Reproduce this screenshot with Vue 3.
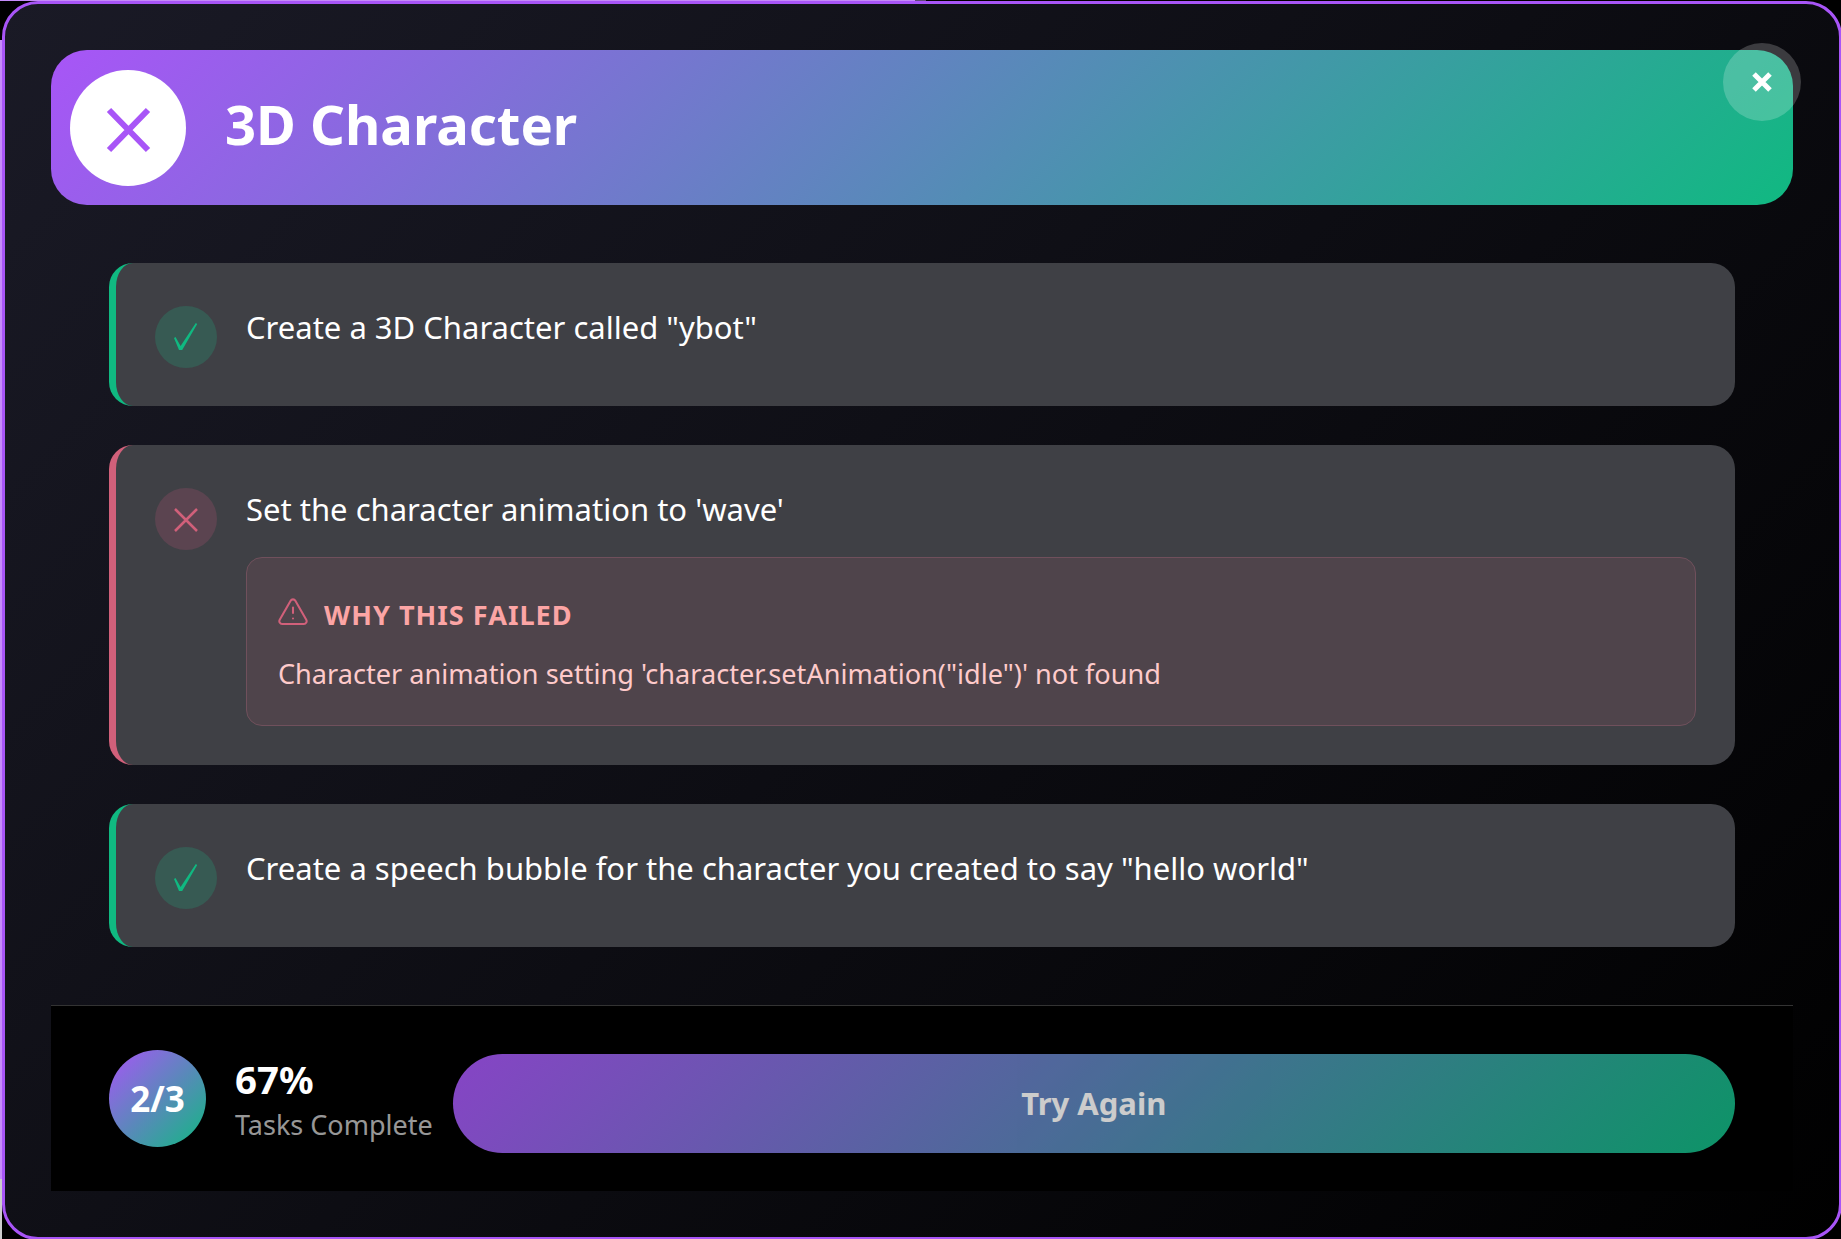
<template>
  <div class="page">
    <div class="strip-top"></div>
    <div class="strip-top-end"></div>
    <div class="strip-left"></div>
    <div class="modal">
      <button class="close">
        <svg width="78" height="78" viewBox="0 0 78 78" fill="none" stroke="#fff" stroke-width="5">
          <path d="M31 31 L47 47 M47 31 L31 47" />
        </svg>
      </button>
      <header class="head">
        <div class="head-icon">
          <svg width="116" height="116" viewBox="0 0 116 116" fill="none" stroke="#a855f7" stroke-width="6">
            <path d="M39 40 L78 80 M78 40 L39 80" />
          </svg>
        </div>
        <h1>{{ title }}</h1>
      </header>

      <div class="tasks">
        <div v-for="task in tasks" :key="task.text" class="task" :class="task.passed ? 'pass' : 'fail'">
          <div class="mark">
            <svg v-if="task.passed" width="62" height="62" viewBox="0 0 62 62" fill="#10b981">
              <path d="M19 32 L20.5 31 L25.6 40 L40.8 17 L42.2 18 L27.2 44 H24 Z" />
            </svg>
            <svg v-else width="62" height="62" viewBox="0 0 62 62" fill="none" stroke="#d1607a" stroke-width="2.5">
              <path d="M20 21 L42 43 M42 21 L20 43" />
            </svg>
          </div>
          <div class="task-body">
            <p class="task-text">{{ task.text }}</p>
            <div v-if="task.reason" class="reason">
              <div class="reason-title">
                <svg width="30" height="28" viewBox="1 2 22 20.5" fill="none" stroke="#d1607a" stroke-width="1.5" stroke-linecap="round" stroke-linejoin="round">
                  <path d="m21.73 18-8-14a2 2 0 0 0-3.48 0l-8 14A2 2 0 0 0 4 21h16a2 2 0 0 0 1.73-3Z" />
                  <path d="M12 9v4" />
                  <path d="M12 17h.01" />
                </svg>
                <span>WHY THIS FAILED</span>
              </div>
              <p class="reason-text">{{ task.reason }}</p>
            </div>
          </div>
        </div>
      </div>

      <footer class="foot">
        <div class="count">2/3</div>
        <div class="stats">
          <div class="percent">67%</div>
          <div class="label">Tasks Complete</div>
        </div>
        <button class="retry">Try Again</button>
      </footer>
    </div>
  </div>
</template>

<script setup>
const title = "3D Character";

const tasks = [
  { text: 'Create a 3D Character called "ybot"', passed: true },
  {
    text: "Set the character animation to 'wave'",
    passed: false,
    reason: "Character animation setting 'character.setAnimation(\"idle\")' not found",
  },
  { text: 'Create a speech bubble for the character you created to say "hello world"', passed: true },
];
</script>

<style>
html,
body {
  margin: 0;
  background: #000;
}
</style>

<style scoped>
.page {
  position: relative;
  width: 1841px;
  height: 1239px;
  padding: 1px 0 0 2px;
  box-sizing: border-box;
  overflow: hidden;
  background: #000;
  font-family: "Noto Sans", sans-serif;
  color: #fff;
}

.strip-top {
  position: absolute;
  top: 0;
  left: 0;
  width: 915px;
  height: 1px;
  background: #c58cf9;
}

.strip-top-end {
  position: absolute;
  top: 0;
  left: 915px;
  width: 11px;
  height: 1px;
  background: #5f4a78;
}

.strip-left {
  position: absolute;
  top: 40px;
  bottom: 0;
  left: 0;
  width: 2px;
  background: linear-gradient(#c58cf9 95%, #ccc 95%);
}

.modal {
  position: relative;
  width: 1840px;
  height: 1239px;
  box-sizing: border-box;
  padding: 46px;
  border: 3px solid #a855f7;
  border-radius: 36px;
  background: linear-gradient(135deg, #1a1a26 0%, #000 100%);
}

.close {
  position: absolute;
  top: 39px;
  right: 38px;
  width: 78px;
  height: 78px;
  padding: 0;
  border: 0;
  border-radius: 50%;
  background: rgba(255, 255, 255, 0.2);
}

.close svg,
.mark svg,
.head-icon svg {
  display: block;
}

.head {
  display: flex;
  align-items: center;
  gap: 39px;
  height: 155px;
  padding: 0 19px;
  box-sizing: border-box;
  border-radius: 36px;
  background: linear-gradient(135deg, #a855f7 0%, #10b981 100%);
}

.head-icon {
  flex: none;
  width: 116px;
  height: 116px;
  border-radius: 50%;
  background: #fff;
}

h1 {
  margin: 0 0 7px;
  font-size: 54.4px;
  font-weight: 700;
}

.tasks {
  display: flex;
  flex-direction: column;
  gap: 39px;
  padding: 58px;
}

.task {
  display: flex;
  gap: 29px;
  padding: 39px 39px 38px;
  border-left: 7px solid;
  border-radius: 24px;
  background: #3f4045;
}

.pass {
  border-color: #10b981;
}

.fail {
  border-color: #d1607a;
}

.mark {
  flex: none;
  width: 62px;
  height: 62px;
  margin-top: 4px;
  border-radius: 50%;
}

.pass .mark {
  background: #375a53;
}

.fail .mark {
  background: #5b4450;
}

.task-body {
  flex: 1;
}

.task-text {
  margin: 0;
  font-size: 31px;
  line-height: 50px;
}

.reason {
  margin: 23px 0 0.5px;
  padding: 32px 31px 30px;
  border: 1px solid #70505c;
  border-radius: 16px;
  background: #4f444b;
}

.reason-title {
  display: flex;
  align-items: center;
  gap: 16px;
  height: 44px;
  color: #fca5a5;
  font-size: 27.1px;
  font-weight: 700;
  letter-spacing: 1px;
}

.reason-title span {
  margin-top: 4px;
}

.reason-text {
  margin: 18px 0 0;
  color: #fecaca;
  font-size: 27.1px;
  line-height: 43px;
}

.foot {
  display: flex;
  align-items: center;
  height: 186px;
  box-sizing: border-box;
  padding: 0 58px;
  border-top: 1px solid rgba(255, 255, 255, 0.2);
  background: #000;
}

.count {
  flex: none;
  display: flex;
  align-items: center;
  justify-content: center;
  width: 97px;
  height: 97px;
  border-radius: 50%;
  background: linear-gradient(135deg, #a855f7 0%, #10b981 100%);
  font-size: 35px;
  font-weight: 700;
}

.stats {
  flex: none;
  margin: 3px 20px 0 29px;
}

.percent {
  font-size: 38.4px;
  font-weight: 700;
  line-height: 50px;
}

.label {
  margin-top: 1px;
  color: rgba(255, 255, 255, 0.6);
  font-size: 27px;
  line-height: 40px;
}

.retry {
  flex: 1;
  height: 99px;
  margin-top: 10px;
  border: 0;
  border-radius: 50px;
  background: linear-gradient(135deg, #a855f7 0%, #10b981 100%);
  color: #fff;
  font-family: inherit;
  font-size: 31px;
  font-weight: 700;
  opacity: 0.8;
}
</style>
